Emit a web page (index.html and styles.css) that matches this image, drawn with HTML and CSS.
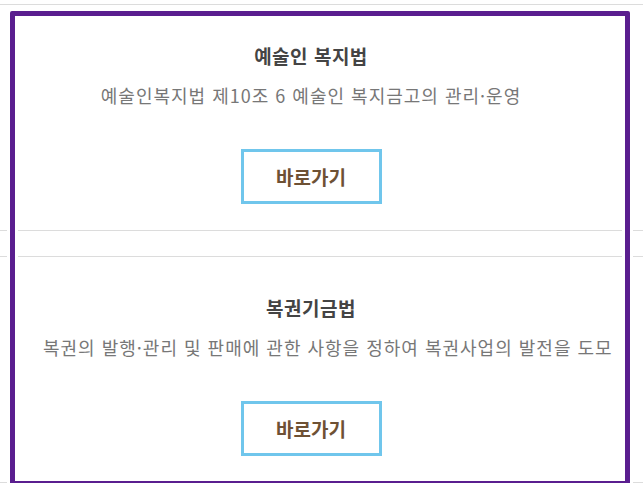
FILE: index.html
```html
<!DOCTYPE html>
<html lang="ko">
<head>
  <meta charset="UTF-8" />
  <meta name="viewport" content="width=device-width, initial-scale=1.0"/>
  <title>관련 법령</title>
  <link rel="stylesheet" href="styles.css">
</head>
<body>
  <div class="law-list">
    <div class="law-item">
      <h3 class="law-title">예술인 복지법</h3>
      <p class="law-desc">예술인복지법 제10조 6 예술인 복지금고의 관리·운영</p>
      <a class="go-btn" href="#">바로가기</a>
    </div>
    <div class="law-item">
      <h3 class="law-title">복권기금법</h3>
      <p class="law-desc">복권의 발행·관리 및 판매에 관한 사항을 정하여 복권사업의 발전을 도모</p>
      <a class="go-btn" href="#">바로가기</a>
    </div>

    <!-- keyboard focus ring over the list -->
    <div class="focus-ring"></div>
  </div>
</body>
</html>
```

FILE: styles.css
```css
body {
  margin: 0;
  background: #fff;
  font-family: "Noto Sans CJK KR", "Noto Sans", sans-serif;
}
.law-list {
  position: relative;
  padding-top: 4px;
  display: flex;
  flex-direction: column;
  gap: 25px;
}
.law-item {
  border-top: 1px solid #dcdcdc;
  border-bottom: 1px solid #dcdcdc;
  padding: 36px 64px 26px 43px;
  text-align: center;
}
.law-title {
  margin: 0;
  font-size: 19px;
  line-height: 30px;
  letter-spacing: 0.5px;
  font-weight: bold;
  color: #444;
}
.law-desc {
  margin: 12px 0 0;
  font-size: 18px;
  line-height: 24px;
  letter-spacing: 1px;
  white-space: nowrap;
  color: #777;
}
.go-btn {
  margin: 42px auto 0;
  box-sizing: border-box;
  width: 141px;
  height: 55px;
  border: 3px solid #70c6ec;
  display: flex;
  align-items: center;
  justify-content: center;
  font-size: 19px;
  font-weight: bold;
  color: #6e5134;
  text-decoration: none;
}
.focus-ring {
  position: absolute;
  left: 10px;
  top: 11px;
  width: 620px;
  height: 475px;
  box-sizing: border-box;
  border: 5px solid #5a1e8f;
  border-radius: 2px;
  box-shadow: 0 0 0 3px #fff, inset 0 0 0 3px #fff;
}
```
